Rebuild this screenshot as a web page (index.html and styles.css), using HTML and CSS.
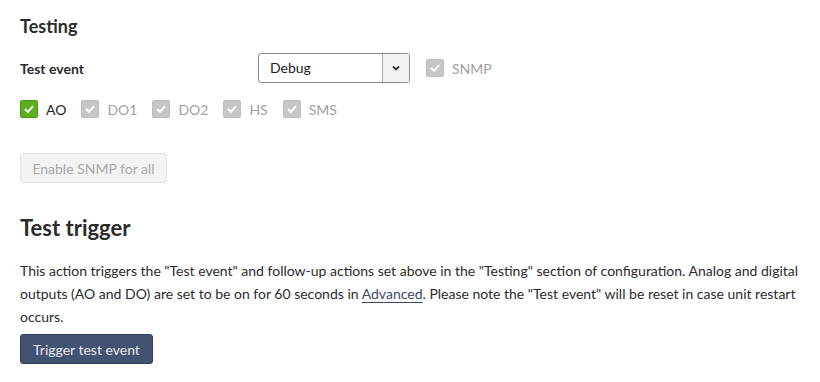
FILE: index.html
```html
<!DOCTYPE html>
<html>
<head>
<meta charset="utf-8">
<link rel="stylesheet" href="styles.css">
</head>
<body>
<div class="page">
  <h2 class="h-sub">Testing</h2>
  <div class="row-event">
    <div class="label">Test event</div>
    <div class="select">
      <span class="select-val">Debug</span>
      <span class="select-btn">
        <svg width="10" height="8" viewBox="0 0 10 8"><path d="M2 2.5 L5 5.5 L8 2.5" fill="none" stroke="#333" stroke-width="1.8"/></svg>
      </span>
    </div>
    <label class="cb dis"><span class="box"><svg width="12" height="10" viewBox="0 0 12 10"><path d="M2 5 L5 7.8 L10 2.2" fill="none" stroke="#fff" stroke-width="2"/></svg></span>SNMP</label>
  </div>
  <div class="row-cbs">
    <label class="cb on"><span class="box"><svg width="12" height="10" viewBox="0 0 12 10"><path d="M2 5 L5 7.8 L10 2.2" fill="none" stroke="#fff" stroke-width="2"/></svg></span>AO</label>
    <label class="cb dis"><span class="box"><svg width="12" height="10" viewBox="0 0 12 10"><path d="M2 5 L5 7.8 L10 2.2" fill="none" stroke="#fff" stroke-width="2"/></svg></span>DO1</label>
    <label class="cb dis"><span class="box"><svg width="12" height="10" viewBox="0 0 12 10"><path d="M2 5 L5 7.8 L10 2.2" fill="none" stroke="#fff" stroke-width="2"/></svg></span>DO2</label>
    <label class="cb dis"><span class="box"><svg width="12" height="10" viewBox="0 0 12 10"><path d="M2 5 L5 7.8 L10 2.2" fill="none" stroke="#fff" stroke-width="2"/></svg></span>HS</label>
    <label class="cb dis"><span class="box"><svg width="12" height="10" viewBox="0 0 12 10"><path d="M2 5 L5 7.8 L10 2.2" fill="none" stroke="#fff" stroke-width="2"/></svg></span>SMS</label>
  </div>
  <button class="btn-light">Enable SNMP for all</button>
  <h1 class="h-main">Test trigger</h1>
  <p class="desc">This action triggers the "Test event" and follow-up actions set above in the "Testing" section of configuration. Analog and digital outputs (AO and DO) are set to be on for 60 seconds in <a href="#" class="link">Advanced</a>. Please note the "Test event" will be reset in case unit restart occurs.</p>
  <button class="btn-dark">Trigger test event</button>
</div>
</body>
</html>
```
FILE: styles.css
```css
html, body { margin: 0; padding: 0; background: #fff; }
body { font-family: Lato, "Open Sans", sans-serif; color: #2b2b2b; }
.page { padding: 14px 20px 0 20px; }
.h-sub { font-size: 18px; font-weight: 700; margin: 0; line-height: 24px; color: #2b2b2b; }
.row-event { display: flex; align-items: center; margin-top: 15px; height: 30px; }
.label { font-size: 14px; font-weight: 700; width: 238px; }
.select { display: flex; width: 150px; height: 28px; border: 1px solid #8a8a8a; border-radius: 3px; overflow: hidden; }
.select-val { flex: 1; font-size: 14px; padding-left: 11px; line-height: 28px; color: #222; }
.select-btn { width: 26px; border-left: 1px solid #aaa; background: #f2f2f2; display: flex; align-items: center; justify-content: center; }
.row-event .cb { margin-left: 16px; }
.row-cbs { display: flex; gap: 0 15px; margin-top: 17px; }
.cb { display: flex; align-items: center; font-size: 14px; gap: 8px; height: 18px; }
.box { width: 18px; height: 18px; box-sizing: border-box; border-radius: 2px; display: flex; align-items: center; justify-content: center; }
.cb.on { color: #222; }
.cb.on .box { background: #5cae1e; border: 1px solid #4a9514; }
.cb.dis { color: #a0a0a0; }
.cb.dis .box { background: #c6c6c6; border: 1px solid #bdbdbd; }
.btn-light { display: block; margin-top: 35px; width: 147px; height: 30px; background: #f3f3f3; border: 1px solid #e2e2e2; border-radius: 3px; font-family: Lato, sans-serif; font-size: 14px; color: #a8a8a8; padding: 0; }
.h-main { font-size: 22px; font-weight: 700; margin: 31px 0 0 0; line-height: 28px; color: #2b2b2b; }
.desc { font-size: 14px; line-height: 23px; margin: 17px 0 0 0; color: #2b2b2b; }
.link { color: #3a4a6b; text-decoration: underline; text-underline-offset: 3px; }
.btn-dark { display: block; margin-top: 6px; width: 133px; height: 30px; background: #435272; border: 1px solid #2f3c57; border-radius: 3px; font-family: Lato, sans-serif; font-size: 14px; color: #e8ebf0; padding: 0; }
```
